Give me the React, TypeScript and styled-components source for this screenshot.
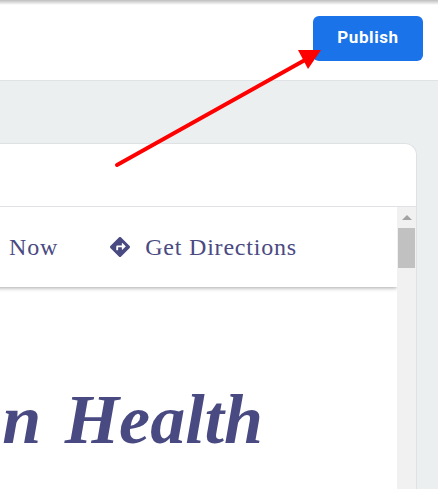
import styled, { createGlobalStyle } from "styled-components";
import { FaDirections } from "react-icons/fa";

const GlobalStyle = createGlobalStyle`
  html, body {
    margin: 0;
    padding: 0;
    background: #ebeff0;
  }
`;

const Page = styled.div`
  position: relative;
  width: 438px;
  height: 489px;
  overflow: hidden;
  display: flex;
  flex-direction: column;
  background: #ebeff0;
`;

const TopShade = styled.div`
  position: absolute;
  top: 0;
  left: 0;
  right: 0;
  height: 5px;
  background: linear-gradient(#bdbdbd, #ffffff00);
`;

const Header = styled.header`
  flex: none;
  height: 81px;
  box-sizing: border-box;
  display: flex;
  justify-content: flex-end;
  align-items: flex-start;
  padding: 16px 15px 0 0;
  background: #ffffff;
  border-bottom: 1px solid #dfe3e5;
`;

const PublishButton = styled.button`
  width: 110px;
  height: 45px;
  padding: 0 0 3px;
  border: none;
  border-radius: 6px;
  background: #1a73e8;
  color: #ffffff;
  font-family: "Roboto", sans-serif;
  font-size: 17px;
  font-weight: 700;
  letter-spacing: 0.6px;
`;

const Workspace = styled.main`
  flex: 1;
  min-height: 0;
  display: flex;
  justify-content: flex-end;
  padding: 62px 21px 0 0;
`;

const Card = styled.section`
  flex: none;
  width: 520px;
  display: flex;
  flex-direction: column;
  background: #ffffff;
  border: 1px solid #dfe1e5;
  border-bottom: none;
  border-radius: 12px 12px 0 0;
`;

const CardTitle = styled.div`
  flex: none;
  height: 62px;
  border-bottom: 1px solid #dfe1e5;
`;

const Preview = styled.div`
  flex: 1;
  min-height: 0;
  display: flex;
`;

const Site = styled.div`
  flex: 1;
  min-width: 0;
  overflow: hidden;
`;

const SiteNav = styled.nav`
  height: 80px;
  padding-right: 100px;
  display: flex;
  justify-content: flex-end;
  align-items: center;
  gap: 52px;
  background: #ffffff;
  box-shadow: 0 1px 4px rgba(0, 0, 0, 0.35);
  color: #4a4a82;
  font-family: "Liberation Serif", serif;
  font-size: 24px;
  letter-spacing: 0.8px;
`;

const NavLink = styled.span`
  display: flex;
  align-items: center;
  gap: 15px;
  white-space: nowrap;
`;

const Hero = styled.h1`
  margin: 93px 0 0;
  padding-right: 134px;
  display: flex;
  justify-content: flex-end;
  white-space: pre;
  color: #4a4a82;
  font-family: "Liberation Serif", serif;
  font-size: 70px;
  font-style: italic;
  font-weight: 700;
  line-height: 80px;
  word-spacing: 6px;
`;

const Scrollbar = styled.div`
  flex: none;
  width: 19px;
  display: flex;
  flex-direction: column;
  align-items: center;
  background: #f1f1f1;
`;

const ScrollArrow = styled.div`
  margin-top: 8px;
  width: 0;
  height: 0;
  border-left: 5px solid transparent;
  border-right: 5px solid transparent;
  border-bottom: 5px solid #a3a3a3;
`;

const ScrollThumb = styled.div`
  margin-top: 8px;
  width: 17px;
  height: 40px;
  background: #c1c1c1;
`;

const Arrow = styled.svg`
  position: absolute;
  top: 0;
  left: 0;
  pointer-events: none;
`;

export default function App() {
  return (
    <Page>
      <GlobalStyle />
      <Header>
        <PublishButton>Publish</PublishButton>
      </Header>
      <TopShade />
      <Workspace>
        <Card>
          <CardTitle />
          <Preview>
            <Site>
              <SiteNav>
                <NavLink>Now</NavLink>
                <NavLink>
                  <FaDirections size={20} />
                  Get Directions
                </NavLink>
              </SiteNav>
              <Hero>n Health</Hero>
            </Site>
            <Scrollbar>
              <ScrollArrow />
              <ScrollThumb />
            </Scrollbar>
          </Preview>
        </Card>
      </Workspace>
      <Arrow width="438" height="489" viewBox="0 0 438 489">
        <line x1="117" y1="165" x2="305" y2="60" stroke="#ff0000" strokeWidth="4" strokeLinecap="round" />
        <polygon points="321,50 298,50 308,69" fill="#ff0000" />
      </Arrow>
    </Page>
  );
}
